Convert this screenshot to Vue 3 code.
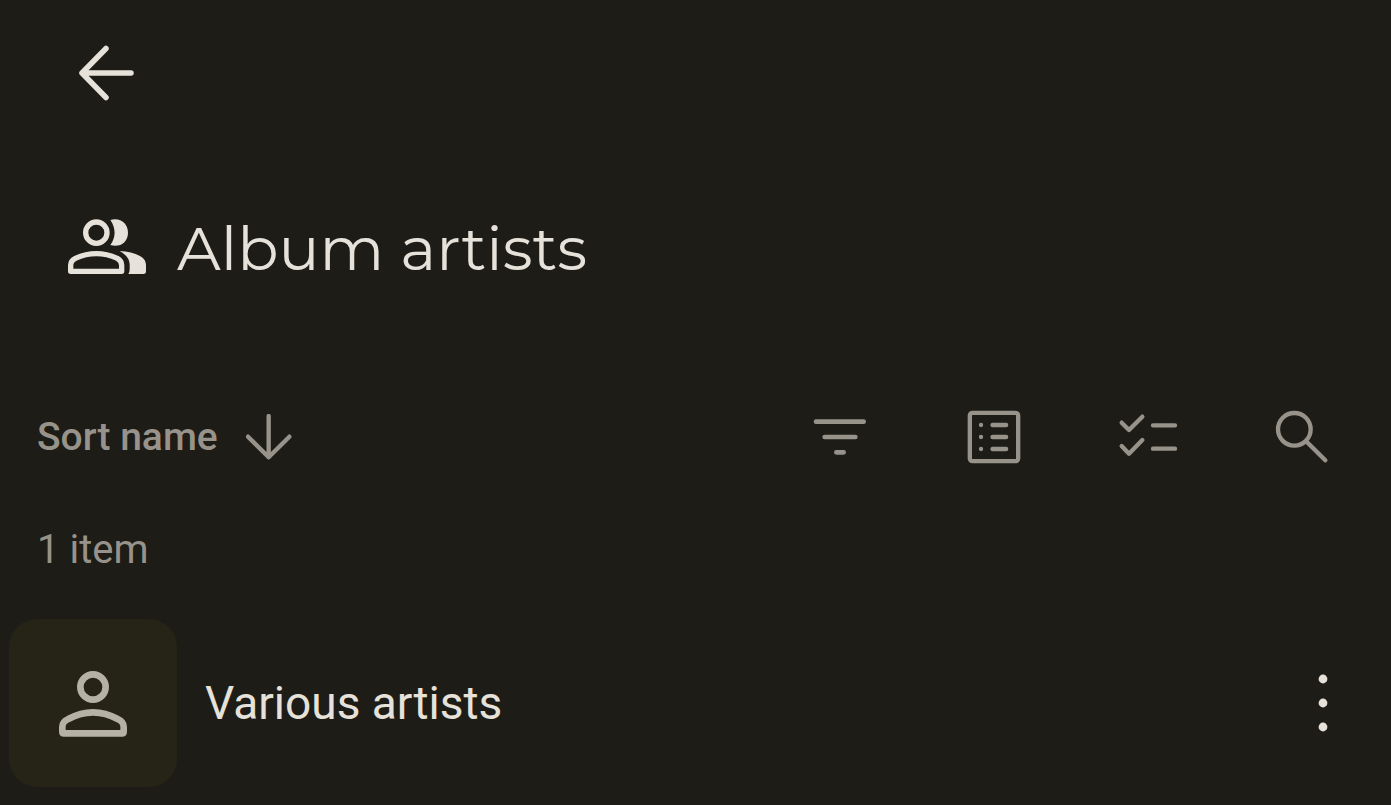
<script setup>
import { ref } from 'vue'

const artists = ref([{ id: 1, name: 'Various artists' }])
</script>

<template>
  <main class="screen">
    <header class="top">
      <button class="icon-btn" type="button" aria-label="Back">
        <svg class="icon thin" viewBox="0 0 84 84">
          <path d="M42 17.5 18 42 42 66.5M18 42H67" />
        </svg>
      </button>
    </header>

    <div class="title">
      <svg class="people" viewBox="54 57 234 165" aria-hidden="true">
        <circle cx="139" cy="98" r="32" />
        <path d="M62 214V196Q62 182 76 175Q139 147 202 175Q215 182 215 196V214Z" />
        <path class="solid" d="M181 60C210 51 234 70 234 98C234 126 210 144 181 135C198 112 198 84 181 60Z" />
        <path class="solid" d="M209 153Q245 155 270 168Q288 178 288 195V214Q288 222 280 222H235Q239 216 239 208V192Q237 168 209 153Z" />
      </svg>
      <h1>Album artists</h1>
    </div>

    <div class="toolbar">
      <button class="sort" type="button">
        <span>Sort name</span>
        <svg class="sort-arrow" viewBox="679 57 138 138" aria-hidden="true">
          <path d="M747 63V187M685 125 747 187 809 125" />
        </svg>
      </button>
      <div class="actions">
        <button class="icon-btn" type="button" aria-label="Filter">
          <svg class="icon" viewBox="-6 0 252 252">
            <path class="bold" d="M48 80H191M74 126H166M109 172H131" />
          </svg>
        </button>
        <button class="icon-btn" type="button" aria-label="View">
          <svg class="icon" viewBox="456 0 252 252">
            <rect x="509.5" y="53.5" width="145" height="145" rx="8" />
            <path class="bold" d="M578 90H618M578 126H618M578 162H618" />
            <path d="M543 90h.1M543 126h.1M543 162h.1" />
          </svg>
        </button>
        <button class="icon-btn" type="button" aria-label="Select">
          <svg class="icon" viewBox="18 0 252 252">
            <path d="M65 83 87 105 127 65M65 153 87 176 127 135M159 91H225M159 161H225" />
          </svg>
        </button>
        <button class="icon-btn" type="button" aria-label="Search">
          <svg class="icon" viewBox="480 0 252 252">
            <circle cx="583" cy="103" r="49" />
            <path d="M620 140 676 196" />
          </svg>
        </button>
      </div>
    </div>

    <p class="count">{{ artists.length }} item</p>

    <ul class="list">
      <li v-for="artist in artists" :key="artist.id" class="row">
        <div class="cover">
          <svg class="icon person" viewBox="153 153 252 252" aria-hidden="true">
            <circle cx="279" cy="231" r="38" />
            <path d="M187 365V350Q187 335 205 327Q279 287 353 327Q371 335 371 350V365Q371 370 366 370H192Q187 370 187 365Z" />
          </svg>
        </div>
        <span class="name">{{ artist.name }}</span>
        <button class="icon-btn" type="button" aria-label="More options">
          <svg class="icon dots" viewBox="0 0 84 84">
            <circle cx="42" cy="18" r="4.4" />
            <circle cx="42" cy="42" r="4.4" />
            <circle cx="42" cy="66" r="4.4" />
          </svg>
        </button>
      </li>
    </ul>
  </main>
</template>

<style>
body {
  background: #1e1c17;
}
</style>

<style scoped>
.screen {
  box-sizing: border-box;
  min-height: 100vh;
  color: #e6e2da;
  font-family: Roboto, "Liberation Sans", sans-serif;
}

button {
  padding: 0;
  border: 0;
  background: none;
  color: inherit;
  font: inherit;
  cursor: pointer;
}

svg {
  display: block;
  flex: none;
  fill: none;
  stroke: currentColor;
  stroke-width: 13px;
  stroke-linecap: round;
  stroke-linejoin: round;
}

.icon-btn {
  flex: none;
}

.icon {
  width: 84px;
  height: 84px;
}

.thin {
  stroke-width: 5.5px;
}

.bold {
  stroke-width: 14px;
}

.top {
  display: flex;
  align-items: center;
  height: 146px;
  padding: 0 64px;
}

.title {
  display: flex;
  align-items: center;
  gap: 31px;
  height: 200px;
  padding: 0 68px;
}

.people {
  width: 78px;
  height: 55px;
  stroke-width: 16px;
}

.solid {
  fill: currentColor;
  stroke: none;
}

h1 {
  margin: 0;
  padding-top: 4px;
  font-family: Montserrat, Inter, sans-serif;
  font-size: 61px;
  font-weight: 400;
  line-height: 80px;
}

.toolbar {
  display: flex;
  align-items: center;
  justify-content: space-between;
  height: 182px;
  padding: 0 47px 0 37px;
  color: #97938a;
}

.sort {
  display: flex;
  align-items: center;
  gap: 28px;
  font-size: 39px;
  font-weight: 500;
  line-height: 48px;
}

.sort-arrow {
  width: 46px;
  height: 46px;
}

.actions {
  display: flex;
  gap: 70px;
}

.count {
  margin: 0;
  padding: 0 37px;
  color: #97938a;
  font-size: 40px;
  line-height: 44px;
}

.list {
  margin: 0;
  padding: 47px 26px 18px 9px;
  list-style: none;
}

.row {
  display: flex;
  align-items: center;
}

.cover {
  display: grid;
  place-items: center;
  flex: none;
  width: 168px;
  height: 168px;
  border-radius: 28px;
  background: #262416;
  color: #b5b1a4;
}

.person {
  stroke-width: 20px;
}

.name {
  flex: 1;
  margin-left: 28px;
  font-size: 46px;
  line-height: 56px;
}

.dots {
  fill: currentColor;
  stroke: none;
}
</style>
